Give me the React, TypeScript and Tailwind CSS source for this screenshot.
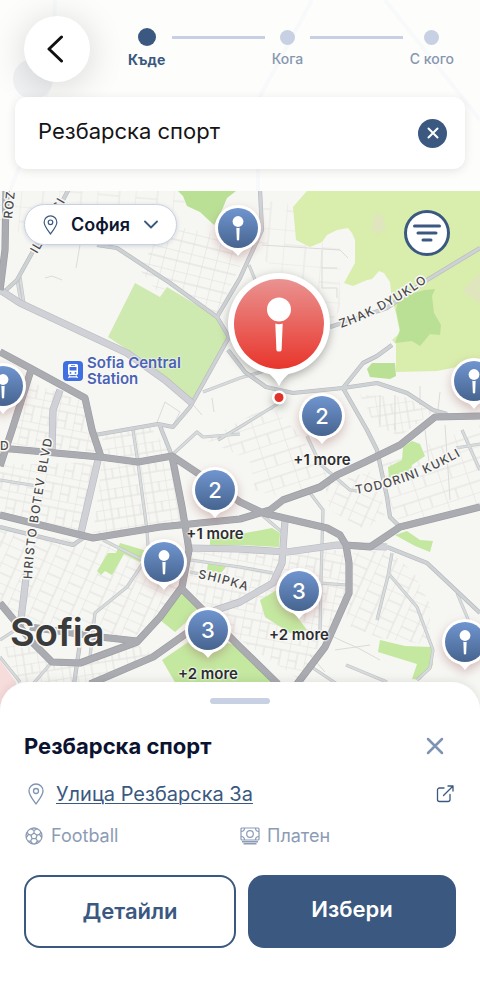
import React, { useState } from 'react';
import { clsx } from 'clsx';

interface MapPin {
  x: number;
  y: number;
  count?: number;
  more?: number;
}

// Coordinates share the viewBox of the city map below
const MAP_TOP = 191;
const MAP_WIDTH = 480;
const MAP_HEIGHT = 519;

const pins: MapPin[] = [
  { x: 238, y: 228 },
  { x: 3, y: 386 },
  { x: 474, y: 381 },
  { x: 322, y: 416, count: 2, more: 1 },
  { x: 215, y: 490, count: 2, more: 1 },
  { x: 164, y: 562 },
  { x: 299, y: 591, count: 3, more: 2 },
  { x: 208, y: 630, count: 3, more: 2 },
  { x: 465, y: 642 },
];

const steps = ['Къде', 'Кога', 'С кого'];

const parks = [
  'M135 283 160 297 167 287 217 317 228 337 192 400 181 394 165 380 140 358 108 337Z',
  'M178 191H236L227 198 222 210 214 225 200 212 187 206 183 196Z',
  'M120 543 147 551 140 562 124 554 112 575 105 571 101 575 97 571 108 553 116 553Z',
  'M183 592 200 610 175 632 160 620Z',
  'M162 660 200 634 240 647 275 684H176Z',
  'M210 537 240 534 272 528 280 533 279 547 240 545 210 545Z',
  'M208 563 227 566 220 574 207 570Z',
  'M260 600 277 590 307 630 290 633 265 617Z',
  'M403 447 412 441 420 444 425 456 412 465 410 475 389 478 388 467 402 460Z',
  'M395 535 407 531 420 540 433 541 430 552 415 546Z',
  'M380 640 405 646 431 647 433 665 420 680 412 679 417 664 378 652Z',
];

const deepParks = [
  'M398 300 410 294 425 290 435 289 432 296 434 313 441 325 440 335 430 334 420 346 412 341 395 343 400 330 396 310Z',
  'M372 363 395 363 396 376 390 379 370 377 367 369Z',
];

const lightPark =
  'M293 207 307 191H480V365L457 367 437 371 396 372 396 344 392 340 400 333 396 313 392 300 390 282 384 273 379 271 372 279 367 280 353 286 344 283 355 263 355 240 352 233 348 228 337 230 327 235 322 242 310 247 296 240Z';

const blocks = [
  { fill: 'url(#grid-a)', d: 'M0 465 100 462 82 536 0 512Z' },
  { fill: 'url(#grid-b)', d: 'M102 462 170 460 183 522 93 535Z' },
  { fill: 'url(#grid-c)', d: 'M0 530 90 542 182 560 180 590 135 637 20 627 0 603Z' },
  { fill: 'url(#grid-a)', d: 'M25 380 84 402 97 452 12 445Z' },
  { fill: 'url(#grid-f)', d: 'M140 270 155 240 185 228 233 238 242 262 217 315 167 284 160 295Z' },
  { fill: 'url(#grid-e)', d: 'M0 191H178L190 210 130 215 70 205 30 240 0 220Z' },
  { fill: 'url(#grid-e)', d: 'M263 200 295 205 296 240 340 245 340 310 325 330 280 270 255 255Z' },
  { fill: 'url(#grid-d)', d: 'M205 440 270 405 300 435 315 460 330 475 285 498 255 490 250 460Z' },
  { fill: 'url(#grid-b)', d: 'M360 395 405 397 433 412 400 436 375 425Z' },
  { fill: 'url(#grid-b)', d: 'M103 432 150 426 170 453 138 459 101 454Z' },
  { fill: 'url(#grid-d)', d: 'M380 462 480 425V505L400 523 388 500Z' },
  { fill: 'url(#grid-c)', d: 'M325 485 375 470 385 515 365 530 330 510Z' },
  { fill: 'url(#grid-a)', d: 'M190 550 345 550 347 595 300 680 240 640 190 590Z' },
  { fill: 'url(#grid-c)', d: 'M352 553 390 550 415 575 430 605 430 645 380 638 345 625 350 600Z' },
  { fill: 'url(#grid-b)', d: 'M0 640 35 645 55 665 137 645 155 655 95 684H20Z' },
];

const lanes = [
  'M45 278 52 276 62 280',
  'M76 268 80 245',
  'M322 250V288H337V298M322 268H337',
  'M262 245 340 250 348 258',
  'M280 300 287 330 300 300',
  'M156 425 165 402 180 412 172 427',
  'M182 392 202 415M212 398 214 412',
  'M300 640 320 630 340 640 358 648 380 660',
  'M310 655 325 672M335 650 370 645',
  'M380 395V425M395 395V430',
  'M420 386V405M440 392 438 410',
  'M425 430 430 470M445 425 450 500',
];

const minorRoads = [
  'M133 430 138 463 147 530 148 546',
  'M0 480 37 486',
  'M103 540 147 562 160 572',
  'M143 563 127 587 95 613 90 657',
  'M52 662 33 684',
  'M0 640 20 627',
  'M0 657 20 682',
  'M172 455 197 432 203 437 240 434',
  'M190 560 240 567 273 573',
  'M190 572 230 580',
  'M320 583 346 585',
  'M263 516 282 532',
  'M310 493 323 510 321 580 320 630',
  'M307 436 320 464 350 490 357 491',
  'M392 553 388 576 377 620',
  'M388 573 417 607 433 650 430 668 417 680',
  'M457 593 470 624',
  'M462 430 474 457 480 470',
  'M456 448 480 444',
  'M346 665 387 682',
  'M313 668 337 684',
  'M203 392 240 378 268 370',
  'M218 440 240 427 279 403',
  'M249 265 258 287',
  'M17 280 21 302',
  'M20 277 24 304',
];

const mediumRoads = [
  'M72 183 55 215 32 253 17 280 4 292',
  'M97 245 117 248 170 283 217 317 229 337 190 407 173 427 158 424 95 435',
  'M160 426 172 456',
  'M217 317 240 278 262 230 260 190',
  'M228 350 245 372 266 387 293 393 343 388 377 383 407 393 433 410 447 414',
  'M343 388 363 363 377 356 392 345',
  'M343 388 367 430 377 450 387 497 390 517 400 527',
  'M330 327 387 308 427 280 480 248',
  'M0 527 73 545 86 536',
  'M387 547 427 563 480 613',
  'M80 643 74 684',
];

const wideRoads = [
  'M0 290 20 303 127 353 165 380 192 403',
  'M60 390 53 410 52 450',
  'M27 570 20 627',
  'M98 460 80 537',
  'M188 548 240 549 287 552 337 545 387 547',
  'M285 520 282 563 273 583 240 602 213 611',
];

const arteries = [
  'M6 191 5 250 0 290',
  'M0 448 100 457 138 462 172 456 205 478 240 502 263 513 327 528 340 535 346 545 349 563 349 593 325 647 297 684',
  'M0 352 30 368 85 398 92 430 101 457',
  'M31 370 12 430 0 466',
  'M0 515 93 538 160 527 240 519 270 510 283 500 320 487 337 475 363 463 400 445 435 417 480 416',
  'M172 456 182 507 187 537 189 550 182 587 160 617 137 642 80 663 52 662 33 643 0 603',
  'M137 641 100 637 30 627',
  'M90 684 153 657 187 633',
  'M183 590 240 647 278 684',
  'M346 545 370 547 400 527 480 507',
];

const RoadLayer: React.FC<{ roads: string[]; casing: string; fill: string; width: number }> = ({
  roads,
  casing,
  fill,
  width,
}) => (
  <g fill="none" strokeLinejoin="round">
    <path d={roads.join('')} stroke={casing} strokeWidth={width + 1.2} />
    <path d={roads.join('')} stroke={fill} strokeWidth={width} />
  </g>
);

const CityMap: React.FC = () => (
  <svg
    viewBox="0 191 480 519"
    preserveAspectRatio="none"
    className="absolute inset-0 h-full w-full"
    aria-hidden="true"
  >
    <defs>
      <pattern id="grid-a" width="17" height="24" patternUnits="userSpaceOnUse" patternTransform="rotate(11)">
        <path d="M0 0H17M0 8H17M0 17H9M0 0V24M9 8V24" fill="none" stroke="#e1e0de" />
      </pattern>
      <pattern id="grid-b" width="22" height="20" patternUnits="userSpaceOnUse" patternTransform="rotate(-9)">
        <path d="M0 0H22M0 10H22M0 0V20M8 0V20M15 0V10" fill="none" stroke="#e1e0de" />
      </pattern>
      <pattern id="grid-c" width="23" height="19" patternUnits="userSpaceOnUse" patternTransform="rotate(24)">
        <path d="M0 0H23M0 10H15M0 0V19M15 0V19" fill="none" stroke="#e1e0de" />
      </pattern>
      <pattern id="grid-d" width="27" height="22" patternUnits="userSpaceOnUse" patternTransform="rotate(-18)">
        <path d="M0 0H27M0 11H27M0 0V22M12 11V22" fill="none" stroke="#e1e0de" />
      </pattern>
      <pattern id="grid-e" width="38" height="34" patternUnits="userSpaceOnUse" patternTransform="rotate(5)">
        <path d="M0 0H38M0 15H22M0 0V34M22 0V34" fill="none" stroke="#e6e5e3" />
      </pattern>
      <pattern id="grid-f" width="13" height="20" patternUnits="userSpaceOnUse" patternTransform="rotate(14)">
        <path d="M0 0H13M0 10H13M0 0V20" fill="none" stroke="#dedddb" />
      </pattern>
    </defs>
    <path d="M0 191H480V710H0Z" fill="#f6f6f2" />
    <path d="M0 660 16 682 14 710H0Z" fill="#f7dcdc" />
    {blocks.map((block) => (
      <path key={block.d} d={block.d} fill={block.fill} />
    ))}
    <path d={lanes.join('')} fill="none" stroke="#dcdbda" />
    <path d={lightPark} fill="#d9edac" />
    <path d="M375 213 383 216 386 228 378 235 371 229ZM480 273 462 291 480 303Z" fill="#dfe6bd" />
    <path d={deepParks.join('')} fill="#b9e094" />
    <path d={parks[0]} fill="#cfeab0" />
    <path d={parks[1]} fill="#b9e094" />
    <path d={parks.slice(2).join('')} fill="#c4e8a0" />
    <RoadLayer roads={minorRoads} casing="#bfc3c6" fill="#d8dbdc" width={2} />
    <RoadLayer roads={mediumRoads} casing="#b5b9bd" fill="#cfd2d4" width={3} />
    <RoadLayer roads={wideRoads} casing="#b8babf" fill="#d0d1d6" width={6} />
    <RoadLayer roads={arteries} casing="#9b9ca1" fill="#abacb1" width={6} />
    <g
      fill="#4a4a4c"
      stroke="#f8f8f5"
      strokeWidth="3"
      strokeLinejoin="round"
      paintOrder="stroke"
      className="font-['Inter',sans-serif] text-[12px] font-medium tracking-widest"
    >
      <path id="zhak" d="M341 328 Q392 310 440 272" fill="none" stroke="none" />
      <path id="todorini" d="M356 494 Q412 486 474 448" fill="none" stroke="none" />
      <path id="hristo" d="M32 579 Q34 530 58 410" fill="none" stroke="none" />
      <path id="shipka" d="M198 578 Q225 583 262 596" fill="none" stroke="none" />
      <text><textPath href="#zhak">ZHAK DYUKLO</textPath></text>
      <text><textPath href="#todorini">TODORINI KUKLI</textPath></text>
      <text><textPath href="#hristo">HRISTO BOTEV BLVD</textPath></text>
      <text><textPath href="#shipka">SHIPKA</textPath></text>
      <text transform="translate(12 219) rotate(-84)">ROZ</text>
      <text transform="translate(37 254) rotate(-60)">IL</text>
      <text transform="translate(59 212) rotate(-60)">SI</text>
      <text x="0" y="450">D</text>
    </g>
    <text
      x="10"
      y="646"
      fill="#3b3b3b"
      stroke="#f8f8f5"
      strokeWidth="3"
      paintOrder="stroke"
      className="font-['Inter',sans-serif] text-[38px] font-semibold"
    >
      Sofia
    </text>
  </svg>
);

const Needle: React.FC = () => (
  <g fill="#fff">
    <circle cy="-14.500" r="12" />
    <path d="M-3.700 -.5Q0 .8 3.700 -.5L2.600 26Q2.500 27.500 0 27.500T-2.600 26Z" />
  </g>
);

const PinMarker: React.FC<{ pin: MapPin }> = ({ pin }) => (
  <button
    type="button"
    aria-label={pin.count ? `${pin.count}` : 'Игрище'}
    style={{
      left: `${(pin.x / MAP_WIDTH) * 100}%`,
      top: `${((pin.y - MAP_TOP) / MAP_HEIGHT) * 100}%`,
    }}
    className="absolute h-12 w-12 -translate-x-1/2 -translate-y-1/2"
  >
    <svg viewBox="-24 -24 48 48" className="h-12 w-12 overflow-visible drop-shadow-[0_4px_5px_rgba(150,90,90,0.35)]">
      <defs>
        <linearGradient id="pin-blue" x1="0" y1="0" x2="0" y2="1">
          <stop offset="0" stopColor="#7095cf" />
          <stop offset="1" stopColor="#46648f" />
        </linearGradient>
      </defs>
      <path d="M-14 18Q-4 22 0 28Q4 22 14 18Z" fill="#fff" />
      <circle r="23" fill="#fff" />
      <circle r="20" fill="url(#pin-blue)" />
      {!pin.count && (
        <g transform="scale(.45)">
          <Needle />
        </g>
      )}
    </svg>
    {pin.count && (
      <span className="absolute inset-0 flex items-center justify-center text-[22px] font-medium text-white">
        {pin.count}
      </span>
    )}
    {pin.more && (
      <span className="absolute top-[58px] left-1/2 -translate-x-1/2 whitespace-nowrap text-[15px] leading-5 font-semibold text-[#2d2d2f] [text-shadow:0_0_2px_#fff,0_0_2px_#fff,0_0_3px_#fff]">
        +{pin.more} more
      </span>
    )}
  </button>
);

const LocationIcon: React.FC<{ className: string }> = ({ className }) => (
  <svg viewBox="0 0 16 22" fill="none" stroke="currentColor" strokeWidth="1.300" className={className}>
    <path d="M8 21C6.500 18.500 1 12.500 1 8a7 7 0 0 1 14 0c0 4.500-5.500 10.500-7 13Z" strokeLinejoin="round" />
    <circle cx="8" cy="8" r="2.500" />
  </svg>
);

const FootballIcon: React.FC = () => (
  <svg viewBox="0 0 18 18" fill="none" stroke="currentColor" strokeWidth="1.300" strokeLinejoin="round" className="h-[18px] w-[18px]">
    <circle cx="9" cy="9" r="8" />
    <path d="M9 6 12 8.200 10.900 11.700H7.100L6 8.200ZM9 6V3.500M12 8.200 14.500 7.300M10.900 11.700 12.500 14M7.100 11.700 5.500 14M6 8.200 3.500 7.300M6 1.800 9 3.500 12 1.800M16 5 14.500 7.300 16.800 10.500M15 14.200 12.500 14 10.500 16.600M7.500 16.600 5.500 14 3 14.200M1.200 10.500 3.500 7.300 2 5" />
  </svg>
);

const MoneyIcon: React.FC = () => (
  <svg viewBox="0 0 20 18" fill="none" stroke="currentColor" strokeWidth="1.200" className="h-[18px] w-5">
    <rect x="1" y="1" width="18" height="12" rx="1" />
    <circle cx="10" cy="7" r="3.300" />
    <path d="M1 4.500Q4.500 4.500 4.500 1M15.500 1Q15.500 4.500 19 4.500M1 9.500Q4.500 9.500 4.500 13M15.500 13Q15.500 9.500 19 9.500" />
    <path d="M2 14.800H18M3.500 16.800H16.500" strokeWidth="1.600" />
  </svg>
);

const App: React.FC = () => {
  const [query, setQuery] = useState('Резбарска спорт');

  return (
    <div className="flex min-h-screen flex-col bg-white font-['Inter',sans-serif]">
      <header className="relative bg-[#fdfdfb] pt-4 pb-[22px]">
        <svg
          viewBox="0 0 480 191"
          preserveAspectRatio="none"
          className="absolute inset-0 h-full w-full"
          fill="none"
          stroke="#f8f9fa"
          strokeWidth="4"
          aria-hidden="true"
        >
          <path d="M55 0 52 80 10 191M385 0 480 120M312 0 258 100V191" />
          <circle cx="33" cy="79" r="20" fill="#f0f2f4" stroke="none" />
        </svg>
        <div className="relative flex items-start px-6">
          <button
            type="button"
            aria-label="Назад"
            className="flex h-[66px] w-[66px] shrink-0 items-center justify-center rounded-full bg-white shadow-[0_4px_36px_rgba(0,0,0,0.16)]"
          >
            <svg viewBox="0 0 16 28" fill="none" stroke="#111" strokeWidth="3" strokeLinecap="round" strokeLinejoin="round" className="mr-1 h-7 w-4">
              <path d="M14.500 2 2 14 14.500 26" />
            </svg>
          </button>
          <ol className="mt-3 mr-[2px] ml-[38px] flex flex-1 items-start gap-[7px]">
            {steps.map((step, index) => (
              <React.Fragment key={step}>
                {index > 0 && <li aria-hidden="true" className="mt-2 h-[3px] flex-1 bg-[#c8d1e4]" />}
                <li
                  className={clsx(
                    'flex flex-col items-center text-sm leading-4',
                    index === 0 ? 'font-bold text-[#3a5880]' : 'pt-[2px] font-medium text-[#8696b0]'
                  )}
                >
                  <span
                    className={clsx(
                      'mb-1.5 rounded-full',
                      index === 0 ? 'h-[18px] w-[18px] bg-[#3a5880]' : 'h-[15px] w-[15px] bg-[#c8d1e4]'
                    )}
                  />
                  {step}
                </li>
              </React.Fragment>
            ))}
          </ol>
        </div>
        <div className="relative mx-[15px] mt-[15px] flex h-[72px] items-center rounded-xl bg-white pr-[18px] pl-[23px] shadow-[0_2px_10px_rgba(0,0,0,0.1)]">
          <input
            lang="bg"
            aria-label="Търсене"
            value={query}
            onChange={(e) => setQuery(e.target.value)}
            className="min-w-0 flex-1 bg-transparent pb-1 text-[22px] text-[#151515] outline-none"
          />
          <button
            type="button"
            aria-label="Изчисти"
            onClick={() => setQuery('')}
            className="flex h-[29px] w-[29px] items-center justify-center rounded-full bg-[#3a5880]"
          >
            <svg viewBox="0 0 12 12" stroke="#fff" strokeWidth="2" strokeLinecap="round" className="h-3 w-3">
              <path d="M1.500 1.500 10.500 10.500M10.500 1.500 1.500 10.500" />
            </svg>
          </button>
        </div>
      </header>

      <main className="relative min-h-[500px] flex-1 overflow-hidden">
        <CityMap />

        <div className="absolute top-[164px] left-[63px] flex items-center gap-1">
          <svg viewBox="0 0 20 20" className="h-5 w-5">
            <rect width="20" height="20" rx="4" fill="#3f6fe0" />
            <path
              d="M6.500 3h7A1.500 1.500 0 0 1 15 4.500v8a1.500 1.500 0 0 1-1.500 1.500h-7A1.500 1.500 0 0 1 5 12.500v-8A1.500 1.500 0 0 1 6.500 3ZM6.500 6v3.500h7V6ZM8 4.200v.8h4v-.8ZM7.500 11a.9.9 0 1 0 0 1.800.9.900 0 0 0 0-1.800ZM12.500 11a.9.9 0 1 0 0 1.800.9.900 0 0 0 0-1.800Z"
              fill="#fff"
              fillRule="evenodd"
            />
            <path d="M7 14.500 5.500 17M13 14.500 14.500 17M6.500 15.800H13.500" stroke="#fff" strokeWidth="1.200" />
          </svg>
          <p className="flex flex-col text-[15px] leading-4 font-semibold text-[#4a63b4] [text-shadow:0_0_2px_#fff,0_0_2px_#fff]">
            <span>Sofia Central</span>
            <span>Station</span>
          </p>
        </div>

        {pins.map((pin) => (
          <PinMarker key={`${pin.x}-${pin.y}`} pin={pin} />
        ))}

        <svg
          viewBox="-52 -52 104 136"
          style={{
            left: `${(279 / MAP_WIDTH) * 100}%`,
            top: `${((324 - MAP_TOP) / MAP_HEIGHT) * 100}%`,
          }}
          className="absolute -mt-[52px] -ml-[52px] h-[136px] w-[104px] overflow-visible drop-shadow-[0_3px_5px_rgba(0,0,0,0.3)]"
        >
          <defs>
            <linearGradient id="pin-red" x1="0" y1="0" x2="0" y2="1">
              <stop offset="0" stopColor="#ea9391" />
              <stop offset="1" stopColor="#e8352b" />
            </linearGradient>
          </defs>
          <path d="M-30 40Q-8 46 0 62Q8 46 30 40Z" fill="#fff" />
          <circle r="51" fill="#fff" />
          <circle r="45" fill="url(#pin-red)" />
          <Needle />
          <circle cy="73.500" r="7" fill="#fff" />
          <circle cy="73.500" r="4.500" fill="#e0322b" />
        </svg>

        <button
          type="button"
          className="absolute top-[13px] left-6 flex h-[41px] items-center rounded-full border border-[#c8d1e4] bg-white px-[18px] text-lg font-semibold text-[#0e1630] shadow-[0_1px_4px_rgba(60,88,128,0.2)]"
        >
          <LocationIcon className="mr-[13px] h-5 w-[15px] text-[#3a5880]" />
          София
          <svg viewBox="0 0 14 9" fill="none" stroke="#3a5880" strokeWidth="1.800" strokeLinecap="round" strokeLinejoin="round" className="ml-[14px] h-[9px] w-[14px]">
            <path d="M1 1.500 7 7.500 13 1.500" />
          </svg>
        </button>

        <button
          type="button"
          aria-label="Филтри"
          className="absolute top-[19px] right-[30px] flex h-[46px] w-[46px] items-center justify-center rounded-full border-[3px] border-[#3a5880] bg-white"
        >
          <svg viewBox="0 0 28 18" stroke="#3a5880" strokeWidth="3" strokeLinecap="round" className="h-[18px] w-7">
            <path d="M1.500 2H26.500M5 9H23M10 16H18" />
          </svg>
        </button>
      </main>

      <section className="relative -mt-7 rounded-t-[28px] bg-white px-6 pt-4 pb-12 shadow-[0_-2px_8px_rgba(0,0,0,0.08)]">
        <div className="mx-auto h-1.5 w-[60px] rounded-full bg-[#c8d1e4]" />
        <div className="mt-7 flex items-center justify-between pr-3">
          <h1 className="text-[22px] leading-7 font-bold text-[#0b1330]">Резбарска спорт</h1>
          <button type="button" aria-label="Затвори" className="text-[#7f93b2]">
            <svg viewBox="0 0 18 18" stroke="currentColor" strokeWidth="2.500" strokeLinecap="round" className="h-[18px] w-[18px]">
              <path d="M2 2 16 16M16 2 2 16" />
            </svg>
          </button>
        </div>
        <div className="mt-[22px] flex h-6 items-center">
          <LocationIcon className="mr-3 ml-1 h-[22px] w-4 text-[#7f93b2]" />
          <a href="#map" className="flex-1 text-xl leading-6 text-[#3a5880] underline decoration-1 underline-offset-2">
            Улица Резбарска 3а
          </a>
          <a href="#open" aria-label="Отвори в карти" className="mr-[2px] text-[#3a5880]">
            <svg viewBox="0 0 18 18" fill="none" stroke="currentColor" strokeWidth="1.300" strokeLinecap="round" strokeLinejoin="round" className="h-[18px] w-[18px]">
              <path d="M8 3H3.500A2 2 0 0 0 1.500 5V14.500A2 2 0 0 0 3.500 16.500H12A2 2 0 0 0 14 14.500V9.500M7.500 10.500 16.800 1.200M12 1H17V6" />
            </svg>
          </a>
        </div>
        <div className="mt-[18px] grid grid-cols-2 text-lg leading-6 text-[#8c9cb5]">
          <p className="flex items-center gap-2 pl-[1px]">
            <FootballIcon />
            Football
          </p>
          <p className="flex items-center gap-[7px]">
            <MoneyIcon />
            Платен
          </p>
        </div>
        <div className="mt-[27px] grid h-[73px] grid-cols-[53fr_52fr] gap-3 text-[22px] font-semibold">
          <button type="button" className="rounded-2xl border-2 border-[#3a5880] text-[#3a5880]">
            Детайли
          </button>
          <button type="button" className="rounded-2xl bg-[#3a5880] pb-1 text-white">
            Избери
          </button>
        </div>
      </section>
    </div>
  );
};

export default App;
